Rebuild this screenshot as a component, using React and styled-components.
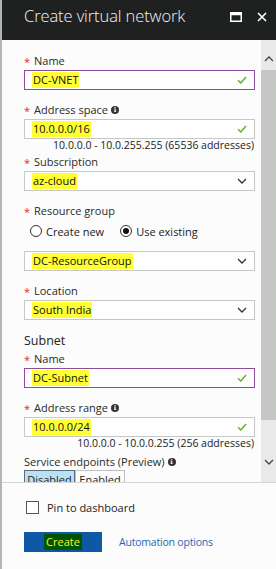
import React from "react";
import styled, { createGlobalStyle } from "styled-components";

const Global = createGlobalStyle`
  html, body { margin: 0; padding: 0; background: #fbfcfb; overflow: hidden; }
  body { font-family: "Open Sans", "Noto Sans", sans-serif; }
`;

const Blade = styled.div`
  width: 276px;
  height: 569px;
  display: flex;
  flex-direction: column;
  box-sizing: border-box;
  border-left: 2px solid #b4b6b4;
  background: #fbfcfb;
`;

const Header = styled.div`
  height: 40px;
  flex: none;
  background: #1f2020;
  display: flex;
  align-items: flex-start;
  padding: 4px 9px 0 22px;
  box-sizing: border-box;
`;

const Title = styled.div`
  flex: 1;
  color: #f4f4f4;
  font-family: "Open Sans", sans-serif;
  font-weight: 300;
  font-size: 16.5px;
  line-height: 24px;
  letter-spacing: -0.1px;
`;

const HeaderIcons = styled.div`
  display: flex;
  gap: 15px;
  padding-top: 8px;
`;

const Body = styled.div`
  flex: none;
  height: 442px;
  display: flex;
  border-bottom: 1px solid #d4d6d4;
`;

const Content = styled.div`
  flex: 1;
  overflow: hidden;
  padding: 14px 6px 0 22px;
`;

const Scrollbar = styled.div`
  width: 15px;
  flex: none;
  background: #e8e9e8;
  display: flex;
  flex-direction: column;
  align-items: center;
`;

const ScrollArrow = styled.div`
  height: ${(p) => p.$h}px;
  display: flex;
  align-items: center;
  justify-content: center;
  padding-top: ${(p) => p.$pt ?? 0}px;
  box-sizing: border-box;
  width: 100%;
`;

const Thumb = styled.div`
  width: 100%;
  height: 350px;
  background: #c5c7c5;
`;

const Field = styled.div`
  margin-bottom: ${(p) => p.$mb ?? 13}px;
`;

const Label = styled.div`
  font-size: 11px;
  line-height: 14px;
  height: 14px;
  color: #2a2a2a;
  display: flex;
  align-items: center;
  margin-bottom: ${(p) => p.$mb ?? 2}px;
`;

const Star = styled.span`
  color: #e3262b;
  width: 10px;
  font-size: 11px;
  position: relative;
  top: 1px;
`;

const Info = styled.span`
  display: inline-flex;
  align-items: center;
  justify-content: center;
  width: 8px;
  height: 8px;
  border-radius: 50%;
  background: #333;
  color: #fff;
  font-size: 6.5px;
  font-weight: 700;
  margin-left: 3px;
  font-family: "DejaVu Serif", serif;
`;

const Box = styled.div`
  height: 20px;
  box-sizing: border-box;
  border: 1px solid ${(p) => (p.$focus ? "#8e4c9e" : "#c6c8c6")};
  background: #fdfefd;
  display: flex;
  align-items: center;
  padding: 0 7px 0 7px;
  font-size: 11px;
  color: #111;
`;

const Mark = styled.span`
  background: #ffff33;
  padding: 2px 1px 2px 1px;
  line-height: 12px;
  flex: none;
`;

const Spacer = styled.span`
  flex: 1;
`;

const Hint = styled.div`
  text-align: right;
  font-size: 10.5px;
  line-height: 12px;
  color: #222;
  padding-right: 1px;
`;

const RadioRow = styled.div`
  display: flex;
  align-items: center;
  gap: 16px;
  height: 22px;
  padding-left: 6px;
  margin-bottom: 9px;
  font-size: 11px;
  color: #222;
`;

const RadioItem = styled.label`
  display: flex;
  align-items: center;
  gap: 4px;
`;

const RadioCircle = styled.span`
  width: 10px;
  height: 10px;
  border: 1px solid #333;
  border-radius: 50%;
  background: #fff;
  display: flex;
  align-items: center;
  justify-content: center;
  &::after {
    content: "";
    width: 6px;
    height: 6px;
    border-radius: 50%;
    background: ${(p) => (p.$on ? "#111" : "transparent")};
  }
`;

const SectionTitle = styled.div`
  font-size: 12.5px;
  line-height: 16px;
  color: #222;
  margin-bottom: 3px;
`;

const Toggle = styled.div`
  display: flex;
`;

const ToggleSeg = styled.div`
  width: ${(p) => p.$w}px;
  height: 18px;
  border: 1px solid ${(p) => (p.$on ? "#5a6e7a" : "#c0c2c0")};
  background: ${(p) => (p.$on ? "#b8e2f4" : "#fbfcfb")};
  font-size: 11px;
  text-align: center;
  line-height: 18px;
  color: #222;
`;

const Footer = styled.div`
  flex: 1;
  padding: 17px 0 0 22px;
`;

const CheckRow = styled.label`
  display: flex;
  align-items: center;
  gap: 8px;
  font-size: 11px;
  color: #222;
  padding-left: 2px;
  margin-bottom: 17px;
`;

const CheckBox = styled.span`
  width: 13px;
  height: 13px;
  border: 1px solid #555;
  box-sizing: border-box;
  background: #fff;
`;

const Actions = styled.div`
  display: flex;
  align-items: center;
  gap: 17px;
`;

const CreateButton = styled.button`
  width: 78px;
  height: 20px;
  border: none;
  background: #0e58a6;
  display: flex;
  align-items: center;
  justify-content: center;
  padding: 0;
`;

const CreateText = styled.span`
  background: #005400;
  color: #f4f43a;
  font-size: 11px;
  font-family: "Open Sans", sans-serif;
  line-height: 16px;
  padding: 0 2px;
`;

const Link = styled.a`
  color: #1f68b5;
  font-size: 10.5px;
  letter-spacing: -0.2px;
  text-decoration: none;
`;

const Check = () => (
  <svg width="10" height="8" viewBox="0 0 10 8">
    <path d="M1 4.2 L3.8 7 L9 1" fill="none" stroke="#5db52c" strokeWidth="1.5" />
  </svg>
);

const Chevron = ({ color = "#333", up }) => (
  <svg width="10" height="6" viewBox="0 0 10 6">
    <path
      d={up ? "M1 5 L5 1 L9 5" : "M1 1 L5 5 L9 1"}
      fill="none"
      stroke={color}
      strokeWidth="1.3"
    />
  </svg>
);

const TextInput = ({ value, focus }) => (
  <Box $focus={focus}>
    <Mark>{value}</Mark>
    <Spacer />
    <Check />
  </Box>
);

const Select = ({ value }) => (
  <Box>
    <Mark>{value}</Mark>
    <Spacer />
    <Chevron />
  </Box>
);

const FieldLabel = ({ children, info }) => (
  <Label>
    <Star>*</Star>
    {children}
    {info && <Info>i</Info>}
  </Label>
);

export default function App() {
  return (
    <>
      <Global />
      <Blade>
        <Header>
          <Title>Create virtual network</Title>
          <HeaderIcons>
            <svg width="12" height="10" viewBox="0 0 12 10">
              <rect x="0.75" y="0.75" width="10.5" height="8.5" fill="none" stroke="#fff" strokeWidth="1.5" />
              <rect x="0.75" y="0.75" width="10.5" height="2.5" fill="#fff" />
            </svg>
            <svg width="10" height="10" viewBox="0 0 10 10">
              <path d="M1 1 L9 9 M9 1 L1 9" stroke="#fff" strokeWidth="1.6" />
            </svg>
          </HeaderIcons>
        </Header>
        <Body>
          <Content>
            <Field>
              <FieldLabel>Name</FieldLabel>
              <TextInput value="DC-VNET" focus />
            </Field>
            <Field $mb={4}>
              <FieldLabel info>Address space</FieldLabel>
              <TextInput value="10.0.0.0/16" />
              <Hint>10.0.0.0 - 10.0.255.255 (65536 addresses)</Hint>
            </Field>
            <Field>
              <FieldLabel>Subscription</FieldLabel>
              <Select value="az-cloud" />
            </Field>
            <Field>
              <FieldLabel>Resource group</FieldLabel>
              <RadioRow>
                <RadioItem>
                  <RadioCircle />
                  Create new
                </RadioItem>
                <RadioItem>
                  <RadioCircle $on />
                  Use existing
                </RadioItem>
              </RadioRow>
              <Select value="DC-ResourceGroup" />
            </Field>
            <Field>
              <FieldLabel>Location</FieldLabel>
              <Select value="South India" />
            </Field>
            <SectionTitle>Subnet</SectionTitle>
            <Field>
              <FieldLabel>Name</FieldLabel>
              <TextInput value="DC-Subnet" focus />
            </Field>
            <Field $mb={6}>
              <FieldLabel info>Address range</FieldLabel>
              <TextInput value="10.0.0.0/24" />
              <Hint>10.0.0.0 - 10.0.0.255 (256 addresses)</Hint>
            </Field>
            <Label $mb={1}>
              Service endpoints (Preview)
              <Info>i</Info>
            </Label>
            <Toggle>
              <ToggleSeg $w={49} $on>Disabled</ToggleSeg>
              <ToggleSeg $w={48}>Enabled</ToggleSeg>
            </Toggle>
          </Content>
          <Scrollbar>
            <ScrollArrow $h={30} $pt={8}>
              <Chevron up color="#444" />
            </ScrollArrow>
            <Thumb />
            <Spacer />
            <ScrollArrow $h={40}>
              <Chevron color="#444" />
            </ScrollArrow>
          </Scrollbar>
        </Body>
        <Footer>
          <CheckRow>
            <CheckBox />
            Pin to dashboard
          </CheckRow>
          <Actions>
            <CreateButton>
              <CreateText>Create</CreateText>
            </CreateButton>
            <Link href="#">Automation options</Link>
          </Actions>
        </Footer>
      </Blade>
    </>
  );
}
